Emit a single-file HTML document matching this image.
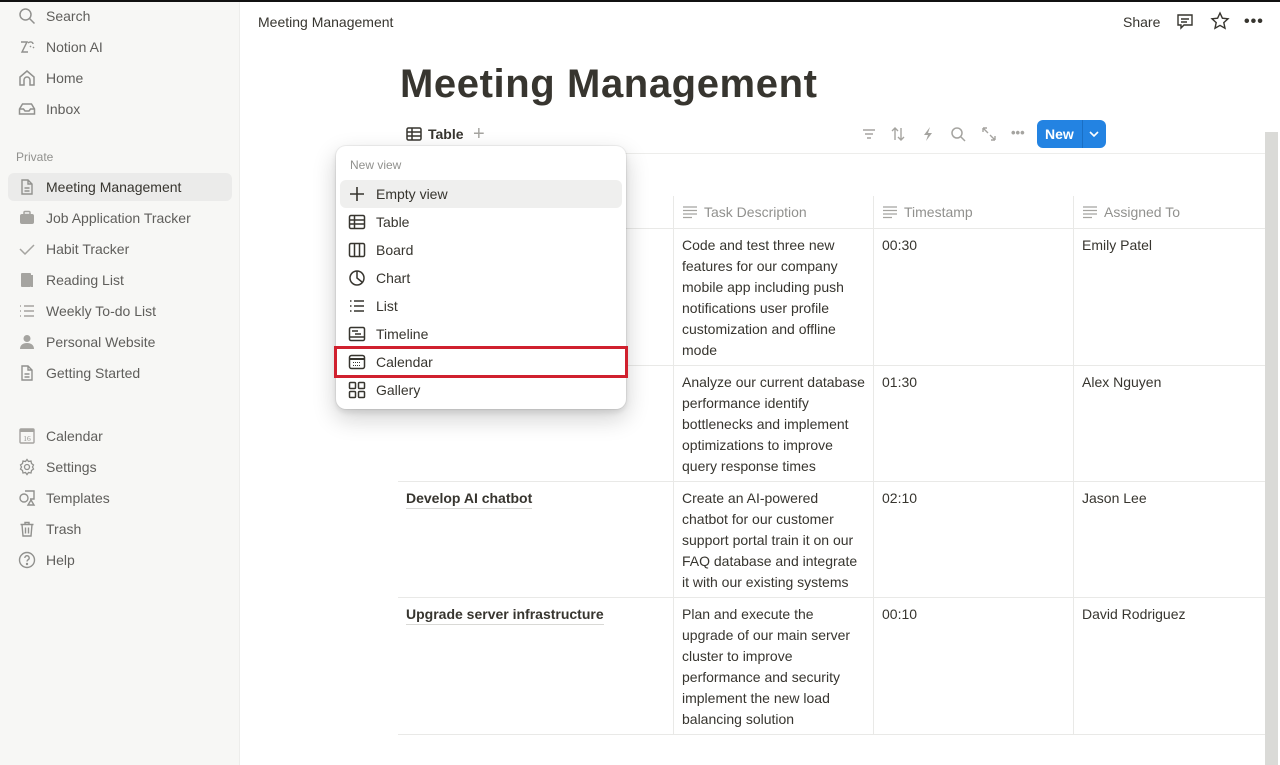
<!DOCTYPE html>
<html><head><meta charset="utf-8"><style>
*{box-sizing:border-box;margin:0;padding:0}
body{width:1280px;height:765px;overflow:hidden;background:#fff;font-family:"Liberation Sans",sans-serif;color:#37352f;position:relative}
.abs{position:absolute}
#top{left:0;top:0;width:1280px;height:2px;background:#111}
#side{left:0;top:2px;width:240px;height:763px;background:#f7f7f5;border-right:1px solid #ededeb}
.si{position:absolute;left:18px;height:28px;display:flex;align-items:center;font-size:14px;color:#5f5e5b;font-weight:500}
.si svg{width:18px;height:18px;margin-right:10px;flex:none}
.si span{color:#5f5e5b}
.sel{left:8px;width:224px;background:#ebebea;border-radius:6px;padding-left:10px}
.sel span{color:#37352f}
.th{position:absolute;top:196px;height:32px;display:flex;align-items:center;font-size:14px;color:#91918e}
.th svg{margin-right:6px}
.cell{position:absolute;font-size:14px;line-height:21px;color:#37352f}
.hl{position:absolute;height:1px;background:#e9e9e7}
.vl{position:absolute;width:1px;background:#e9e9e7}
.title{position:absolute;font-size:14px;font-weight:bold;color:#37352f;border-bottom:1px solid #d9d9d6;line-height:19px}
#menu{left:336px;top:146px;width:290px;height:263px;background:#fff;border-radius:10px;box-shadow:0 0 0 1px rgba(15,15,15,.05),0 3px 6px rgba(15,15,15,.1),0 9px 24px rgba(15,15,15,.2)}
.mi{position:absolute;left:12px;height:28px;display:flex;align-items:center;font-size:14px;color:#37352f}
.mi svg{width:18px;height:18px;margin-right:10px}
</style></head><body>
<div id="top" class="abs"></div>
<div id="side" class="abs">
<div class="si" style="top:0px"><svg viewBox="0 0 18 18" fill="none" stroke="#91918e" stroke-width="1.5"><circle cx="7.5" cy="7.5" r="5.5"/><path d="M11.5 11.5l5 5"/></svg><span>Search</span></div>
<div class="si" style="top:31px"><svg viewBox="0 0 18 18" fill="none" stroke="#91918e" stroke-width="1.4"><path d="M3 4h6l-5 10h6M10 5c2-2 5-1 5 1M12 8l1 1M15 9l1 1"/></svg><span>Notion AI</span></div>
<div class="si" style="top:62px"><svg viewBox="0 0 18 18" fill="none" stroke="#91918e" stroke-width="1.5"><path d="M2 8l7-6 7 6v8h-4v-5a3 3 0 00-6 0v5H2z"/></svg><span>Home</span></div>
<div class="si" style="top:93px"><svg viewBox="0 0 18 18" fill="none" stroke="#91918e" stroke-width="1.5"><path d="M1.5 9l3-5h9l3 5v5h-15zM1.5 9h4l1.5 2h4l1.5-2h4"/></svg><span>Inbox</span></div>
<div class="abs" style="left:16px;top:148px;font-size:12px;color:#91918e">Private</div>
<div class="si sel" style="top:171px"><svg viewBox="0 0 18 18" fill="none" stroke="#91918e" stroke-width="1.4"><path d="M4 2h6l4 4v10H4zM10 2v4h4M6.5 10h5M6.5 13h5"/></svg><span>Meeting Management</span></div>
<div class="si" style="top:202px"><svg viewBox="0 0 18 18" fill="#a5a4a0"><rect x="2" y="5" width="14" height="10" rx="2"/><rect x="6" y="2.5" width="6" height="3" rx="1" fill="none" stroke="#a5a4a0" stroke-width="1.5"/></svg><span>Job Application Tracker</span></div>
<div class="si" style="top:233px"><svg viewBox="0 0 18 18" fill="none" stroke="#a5a4a0" stroke-width="1.5"><path d="M2 9l5 5 9-9"/></svg><span>Habit Tracker</span></div>
<div class="si" style="top:264px"><svg viewBox="0 0 18 18" fill="#a5a4a0"><rect x="3" y="2" width="10" height="14" rx="1"/><rect x="13" y="4" width="2" height="12"/></svg><span>Reading List</span></div>
<div class="si" style="top:295px"><svg viewBox="0 0 18 18" fill="none" stroke="#a5a4a0" stroke-width="1.5"><path d="M2 4h1M2 9h1M2 14h1M6 4h10M6 9h10M6 14h10"/></svg><span>Weekly To-do List</span></div>
<div class="si" style="top:326px"><svg viewBox="0 0 18 18" fill="#a5a4a0"><circle cx="9" cy="5.5" r="3.5"/><path d="M2 16c0-4 3-6 7-6s7 2 7 6z"/></svg><span>Personal Website</span></div>
<div class="si" style="top:357px"><svg viewBox="0 0 18 18" fill="none" stroke="#91918e" stroke-width="1.4"><path d="M4 2h6l4 4v10H4zM10 2v4h4M6.5 10h5M6.5 13h5"/></svg><span>Getting Started</span></div>
<div class="si" style="top:420px"><svg viewBox="0 0 18 18"><rect x="2" y="2" width="14" height="14" rx="1" fill="none" stroke="#a5a4a0" stroke-width="1.4"/><rect x="2" y="2" width="14" height="3" fill="#a5a4a0"/><text x="9" y="14" font-size="7.5" text-anchor="middle" fill="#91918e" font-family="Liberation Serif">16</text></svg><span>Calendar</span></div>
<div class="si" style="top:451px"><svg viewBox="0 0 18 18" fill="none" stroke="#91918e" stroke-width="1.3"><circle cx="9" cy="9" r="2.5"/><path d="M9 1.5l1.5 2 2.5-.5.5 2.5 2 1.5-1 2 1 2-2 1.5-.5 2.5-2.5-.5L9 16.5l-1.5-2-2.5.5-.5-2.5-2-1.5 1-2-1-2 2-1.5.5-2.5 2.5.5z"/></svg><span>Settings</span></div>
<div class="si" style="top:482px"><svg viewBox="0 0 18 18" fill="none" stroke="#91918e" stroke-width="1.4"><circle cx="6" cy="9" r="4"/><path d="M7 2h9v8h-4M10 16l3-5 3 5z"/></svg><span>Templates</span></div>
<div class="si" style="top:513px"><svg viewBox="0 0 18 18" fill="none" stroke="#91918e" stroke-width="1.4"><path d="M2.5 4.5h13M7 4.5V2.5h4v2M4 4.5l1 11.5h8l1-11.5M7.5 7.5v6M10.5 7.5v6"/></svg><span>Trash</span></div>
<div class="si" style="top:544px"><svg viewBox="0 0 18 18" fill="none" stroke="#91918e" stroke-width="1.4"><circle cx="9" cy="9" r="7.5"/><path d="M6.8 7a2.2 2.2 0 114 1.2c-.8.6-1.8 1-1.8 2.3"/><circle cx="9" cy="13" r=".5" fill="#91918e"/></svg><span>Help</span></div>
</div>

<div class="abs" style="left:258px;top:14px;font-size:14px;color:#37352f">Meeting Management</div>
<div class="abs" style="left:1123px;top:14px;font-size:14px;color:#37352f">Share</div>
<svg class="abs" style="left:1175px;top:12px" width="20" height="20" viewBox="0 0 20 20" fill="none" stroke="#37352f" stroke-width="1.4"><path d="M3 3h14v10H9l-3 3v-3H3z"/><path d="M6 7h8M6 10h6"/></svg>
<svg class="abs" style="left:1210px;top:11px" width="20" height="20" viewBox="0 0 20 20" fill="none" stroke="#37352f" stroke-width="1.4"><path d="M10 2l2.4 5.2 5.6.6-4.2 3.8 1.2 5.6L10 14.4 5 17.2l1.2-5.6L2 7.8l5.6-.6z"/></svg>
<div class="abs" style="left:1244px;top:13px;font-size:16px;letter-spacing:1px;color:#37352f;font-weight:bold">•••</div>

<div class="abs" style="left:400px;top:62px;font-size:40px;font-weight:bold;color:#37352f;letter-spacing:0.6px">Meeting Management</div>

<svg class="abs" style="left:406px;top:126px" width="16" height="16" viewBox="0 0 16 16" fill="none" stroke="#37352f" stroke-width="1.5"><rect x="1" y="2" width="14" height="12" rx="1.5"/><path d="M1 6h14M1 10h14M6 2v12"/></svg>
<div class="abs" style="left:428px;top:126px;font-size:14px;font-weight:bold;color:#37352f">Table</div>
<div class="abs" style="left:473px;top:123px;font-size:20px;color:#a5a4a0">+</div>
<div class="hl" style="left:398px;top:153px;width:868px;background:#ededeb"></div>

<svg class="abs" style="left:861px;top:127px" width="16" height="14" viewBox="0 0 16 14" stroke="#a5a4a0" stroke-width="1.5"><path d="M2 3h12M4 7h8M6 11h4"/></svg>
<svg class="abs" style="left:890px;top:126px" width="16" height="16" viewBox="0 0 16 16" fill="none" stroke="#a5a4a0" stroke-width="1.4"><path d="M5 14V2M2 5l3-3 3 3M11 2v12M8 11l3 3 3-3"/></svg>
<svg class="abs" style="left:921px;top:126px" width="14" height="16" viewBox="0 0 14 16" fill="#a5a4a0"><path d="M9 1L3 9h4l-2 6 6-8H7z"/></svg>
<svg class="abs" style="left:950px;top:126px" width="16" height="16" viewBox="0 0 16 16" fill="none" stroke="#a5a4a0" stroke-width="1.5"><circle cx="7" cy="7" r="5"/><path d="M11 11l4 4"/></svg>
<svg class="abs" style="left:981px;top:126px" width="16" height="16" viewBox="0 0 16 16" fill="none" stroke="#a5a4a0" stroke-width="1.4"><path d="M2 2l5 5M2 2v4M2 2h4M14 14l-5-5M14 14v-4M14 14h-4"/></svg>
<div class="abs" style="left:1011px;top:125px;font-size:13px;color:#a5a4a0;font-weight:bold">•••</div>
<div class="abs" style="left:1037px;top:120px;width:69px;height:28px;background:#2383e2;border-radius:6px"></div>
<div class="abs" style="left:1045px;top:126px;font-size:14px;font-weight:bold;color:#fff">New</div>
<div class="abs" style="left:1082px;top:120px;width:1px;height:28px;background:#1a6fc4"></div>
<svg class="abs" style="left:1088px;top:129px" width="12" height="10" viewBox="0 0 12 10" fill="none" stroke="#fff" stroke-width="1.6"><path d="M2 3l4 4 4-4"/></svg>

<div class="abs" style="left:1265px;top:132px;width:13px;height:633px;background:#dadad7"></div>

<div class="th" style="left:682px"><svg width="16" height="14" viewBox="0 0 16 14" stroke="#a5a4a0" stroke-width="1.3"><path d="M1 2h14M1 5.5h14M1 9h14M1 12.5h9"/></svg>Task Description</div>
<div class="th" style="left:882px"><svg width="16" height="14" viewBox="0 0 16 14" stroke="#a5a4a0" stroke-width="1.3"><path d="M1 2h14M1 5.5h14M1 9h14M1 12.5h9"/></svg>Timestamp</div>
<div class="th" style="left:1082px"><svg width="16" height="14" viewBox="0 0 16 14" stroke="#a5a4a0" stroke-width="1.3"><path d="M1 2h14M1 5.5h14M1 9h14M1 12.5h9"/></svg>Assigned To</div>
<div class="hl" style="left:398px;top:228px;width:867px"></div>
<div class="hl" style="left:398px;top:365px;width:867px"></div>
<div class="hl" style="left:398px;top:481px;width:867px"></div>
<div class="hl" style="left:398px;top:597px;width:867px"></div>
<div class="hl" style="left:398px;top:734px;width:867px"></div>
<div class="vl" style="left:673px;top:196px;height:538px"></div>
<div class="vl" style="left:873px;top:196px;height:538px"></div>
<div class="vl" style="left:1073px;top:196px;height:538px"></div>

<div class="cell" style="left:682px;top:235px;width:185px">Code and test three new features for our company mobile app including push notifications user profile customization and offline mode</div>
<div class="cell" style="left:882px;top:235px">00:30</div>
<div class="cell" style="left:1082px;top:235px">Emily Patel</div>
<div class="cell" style="left:682px;top:372px;width:185px">Analyze our current database performance identify bottlenecks and implement optimizations to improve query response times</div>
<div class="cell" style="left:882px;top:372px">01:30</div>
<div class="cell" style="left:1082px;top:372px">Alex Nguyen</div>
<div class="title" style="left:406px;top:489px">Develop AI chatbot</div>
<div class="cell" style="left:682px;top:488px;width:185px">Create an AI-powered chatbot for our customer support portal train it on our FAQ database and integrate it with our existing systems</div>
<div class="cell" style="left:882px;top:488px">02:10</div>
<div class="cell" style="left:1082px;top:488px">Jason Lee</div>
<div class="title" style="left:406px;top:605px">Upgrade server infrastructure</div>
<div class="cell" style="left:682px;top:604px;width:185px">Plan and execute the upgrade of our main server cluster to improve performance and security implement the new load balancing solution</div>
<div class="cell" style="left:882px;top:604px">00:10</div>
<div class="cell" style="left:1082px;top:604px">David Rodriguez</div>

<div id="menu" class="abs">
<div class="abs" style="left:14px;top:12px;font-size:12px;color:#91918e">New view</div>
<div class="abs" style="left:4px;top:34px;width:282px;height:28px;background:#efefee;border-radius:6px"></div>
<div class="mi" style="top:34px"><svg viewBox="0 0 18 18" stroke="#37352f" stroke-width="1.6"><path d="M9 2v14M2 9h14"/></svg>Empty view</div>
<div class="mi" style="top:62px"><svg viewBox="0 0 18 18" fill="none" stroke="#37352f" stroke-width="1.5"><rect x="1.5" y="2.5" width="15" height="13" rx="1.5"/><path d="M1.5 7h15M1.5 11h15M6.5 2.5v13"/></svg>Table</div>
<div class="mi" style="top:90px"><svg viewBox="0 0 18 18" fill="none" stroke="#37352f" stroke-width="1.5"><rect x="1.5" y="2.5" width="15" height="13" rx="1.5"/><path d="M6.5 2.5v13M11.5 2.5v13"/></svg>Board</div>
<div class="mi" style="top:118px"><svg viewBox="0 0 18 18" fill="none" stroke="#37352f" stroke-width="1.5"><circle cx="9" cy="9" r="7"/><path d="M9 2v7l5 4"/></svg>Chart</div>
<div class="mi" style="top:146px"><svg viewBox="0 0 18 18" fill="none" stroke="#37352f" stroke-width="1.5"><path d="M2 4h1.5M2 9h1.5M2 14h1.5M6 4h10M6 9h10M6 14h10"/></svg>List</div>
<div class="mi" style="top:174px"><svg viewBox="0 0 18 18" fill="none" stroke="#37352f" stroke-width="1.5"><rect x="1.5" y="2.5" width="15" height="13" rx="1.5"/><path d="M4 6h6M7 9h6M1.5 12h15"/></svg>Timeline</div>
<div class="mi" style="top:202px"><svg viewBox="0 0 18 18" fill="none" stroke="#37352f" stroke-width="1.5"><rect x="1.5" y="2.5" width="15" height="13" rx="2"/><path d="M1.5 6h15" stroke-width="2"/><path d="M5 9.5h8M5 12.5h8" stroke-width="1" stroke-dasharray="1 1"/></svg>Calendar</div>
<div class="mi" style="top:230px"><svg viewBox="0 0 18 18" fill="none" stroke="#37352f" stroke-width="1.5"><rect x="1.5" y="1.5" width="6" height="6" rx="1"/><rect x="10.5" y="1.5" width="6" height="6" rx="1"/><rect x="1.5" y="10.5" width="6" height="6" rx="1"/><rect x="10.5" y="10.5" width="6" height="6" rx="1"/></svg>Gallery</div>
</div>
<div class="abs" style="left:334px;top:346px;width:294px;height:32px;border:3px solid #d0202e"></div>
</body></html>
